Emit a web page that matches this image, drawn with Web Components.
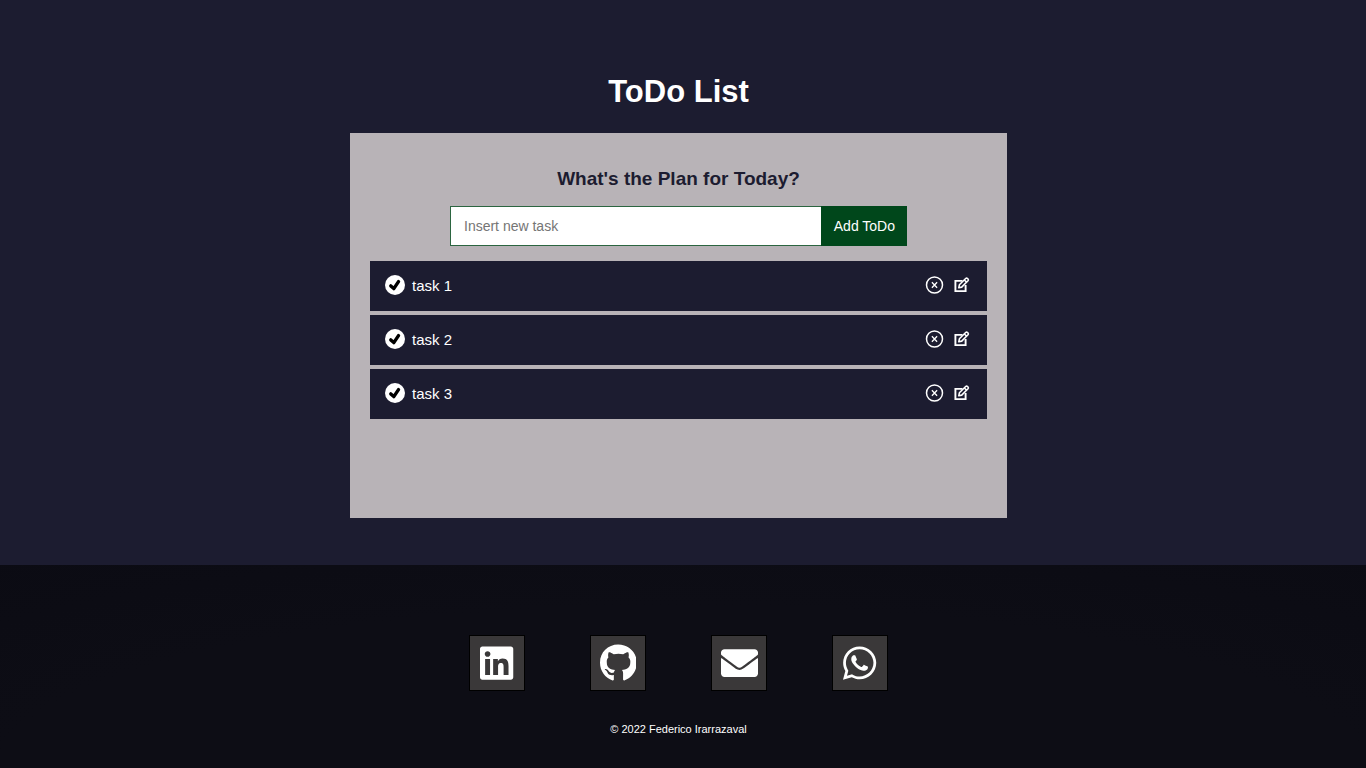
<!DOCTYPE html>
<html lang="en">
<head>
<meta charset="utf-8">
<title>ToDo List</title>
<style>
  body { margin: 0; background: #1c1c30; font-family: "Liberation Sans", Arial, sans-serif; color: #fff; }
</style>
</head>
<body>
<todo-app>
  <todo-panel>
    <todo-item>task 1</todo-item>
    <todo-item>task 2</todo-item>
    <todo-item>task 3</todo-item>
  </todo-panel>
  <site-footer slot="footer">
    <social-link name="linkedin" label="LinkedIn" href="#linkedin"></social-link>
    <social-link name="github" label="GitHub" href="#github"></social-link>
    <social-link name="envelope" label="Email" href="#email"></social-link>
    <social-link name="whatsapp" label="WhatsApp" href="#whatsapp"></social-link>
    <span slot="copyright">© 2022 Federico Irarrazaval</span>
  </site-footer>
</todo-app>

<template id="todo-app">
  <style>
    :host { display: flex; flex-direction: column; min-height: 100vh; }
    main { display: flex; flex-direction: column; align-items: center; padding: 73px 9px 47px 0; }
    h1 { margin: 0 0 22px; font-size: 31px; line-height: 38px; }
    ::slotted(site-footer) { flex: 1; }
  </style>
  <main>
    <h1>ToDo List</h1>
    <slot></slot>
  </main>
  <slot name="footer"></slot>
</template>

<template id="todo-panel">
  <style>
    :host { display: block; box-sizing: border-box; width: 48.4%; min-width: 520px; min-height: 385px;
      padding: 33px 20px; background: #b8b3b7; }
    h2 { margin: 0 0 14px; text-align: center; font-size: 19px; line-height: 26px; color: #1c1c30; }
    form { display: flex; width: 457px; max-width: 100%; margin: 0 auto 15px; }
    input { flex: 1; min-width: 0; box-sizing: border-box; height: 40px; padding: 0 13px; margin: 0;
      border: 1px solid #2b6540; border-right: 0; border-radius: 0; background: #fff; color: #1c1c30; font: inherit; font-size: 14px; outline: none; }
    input::placeholder { color: #757575; opacity: 1; }
    button { height: 40px; margin: 0; padding: 0 12px; border: 1px solid #00471b; border-right: 0;
      background: #00471b; color: #fff; font: inherit; font-size: 14px; cursor: pointer; }
    .list { display: flex; flex-direction: column; gap: 4px; }
  </style>
  <h2>What's the Plan for Today?</h2>
  <form>
    <input type="text" placeholder="Insert new task" aria-label="New task">
    <button type="submit">Add ToDo</button>
  </form>
  <div class="list" role="list"><slot></slot></div>
</template>

<template id="todo-item">
  <style>
    :host { display: flex; align-items: center; box-sizing: border-box; height: 50px; padding: 0 15px 2px; background: #1c1c30; font-size: 15px; }
    button { display: block; padding: 0; border: 0; background: none; color: #fff; cursor: pointer; }
    svg { display: block; }
    .text { flex: 1; margin-left: 7px; line-height: 24px; padding-top: 2px; }
    .actions { display: flex; gap: 7px; }
  </style>
  <button aria-label="Complete task">
    <svg width="20" height="20" viewBox="0 0 20 20"><circle cx="10" cy="10" r="10" fill="#fff"/><path d="M5.8 10.9l3 2.7 4.7-7" fill="none" stroke="#000" stroke-width="3.4" stroke-linecap="round" stroke-linejoin="round"/></svg>
  </button>
  <span class="text"><slot></slot></span>
  <div class="actions">
    <button aria-label="Delete task">
      <svg width="20" height="20" viewBox="0 0 20 20" fill="none" stroke="currentColor"><circle cx="9.5" cy="10" r="8" stroke-width="1.5"/><path d="M6.9 7.2l5.2 5.6M12.1 7.2l-5.2 5.6" stroke-width="1.3"/></svg>
    </button>
    <button aria-label="Edit task">
      <svg width="20" height="20" viewBox="0 0 20 20" fill="none" stroke="currentColor" stroke-width="1.9"><path d="M10.5 5.9H3.4v10.2h10.2V10"/><path d="M6.8 12.8l.6-3 6.3-6.3q.9-.8 1.8 0l.5.5q.8.9 0 1.8l-6.3 6.3zM12.4 5l2.2 2.2" stroke-width="1.6" stroke-linejoin="round"/></svg>
    </button>
  </div>
</template>

<template id="site-footer">
  <style>
    :host { display: flex; flex-direction: column; align-items: center; box-sizing: border-box; padding: 70px 9px 24px 0;
      background: radial-gradient(ellipse 100% 160% at 50% 100%, #0d0d15 0 50%, #0a0a12 100%); }
    nav { display: flex; gap: 65px; }
    small { margin-top: 30px; font-size: 11px; line-height: 16px; }
  </style>
  <nav aria-label="Contact"><slot></slot></nav>
  <small><slot name="copyright"></slot></small>
</template>

<template id="social-link">
  <style>
    :host { display: block; }
    a { display: flex; align-items: center; justify-content: center; box-sizing: border-box; width: 56px; height: 56px;
      border: 1px solid #000; background: #3a3839; color: #fff; }
    svg { display: block; height: 38px; width: auto; max-width: 37px; fill: currentColor; }
  </style>
  <a></a>
</template>

<script>
  const icons = {
    linkedin: [448, 'M416 32H31.9C14.3 32 0 46.5 0 64.3v383.4C0 465.5 14.3 480 31.9 480H416c17.6 0 32-14.5 32-32.3V64.3c0-17.8-14.4-32.3-32-32.3zM135.4 416H69V202.2h66.5V416zm-33.2-243c-21.3 0-38.5-17.3-38.5-38.5S80.9 96 102.2 96c21.2 0 38.5 17.3 38.5 38.5 0 21.3-17.2 38.5-38.5 38.5zm282.1 243h-66.4V312c0-24.8-.5-56.7-34.5-56.7-34.6 0-39.9 27-39.9 54.9V416h-66.4V202.2h63.7v29.2h.9c8.9-16.8 30.6-34.5 62.9-34.5 67.2 0 79.7 44.3 79.7 101.9V416z'],
    github: [496, 'M244.8 8C106.1 8 0 113.3 0 252c0 110.9 69.8 205.8 169.5 239.2 12.8 2.3 17.3-5.6 17.3-12.1 0-6.2-.3-40.4-.3-61.4 0 0-70 15-84.7-29.8 0 0-11.4-29.1-27.8-36.6 0 0-22.9-15.7 1.6-15.4 0 0 24.9 2 38.6 25.8 21.9 38.6 58.6 27.5 72.9 20.9 2.3-16 8.8-27.1 16-33.7-55.9-6.2-112.3-14.3-112.3-110.5 0-27.5 7.6-41.3 23.6-58.9-2.6-6.5-11.1-33.3 2.6-67.9 20.9-6.5 69 27 69 27 20-5.6 41.5-8.5 62.8-8.5s42.8 2.9 62.8 8.5c0 0 48.1-33.6 69-27 13.7 34.7 5.2 61.4 2.6 67.9 16 17.7 25.8 31.5 25.8 58.9 0 96.5-58.9 104.2-114.8 110.5 9.2 7.9 17 22.9 17 46.4 0 33.7-.3 75.4-.3 83.6 0 6.5 4.6 14.4 17.3 12.1C428.2 457.8 496 362.9 496 252 496 113.3 383.5 8 244.8 8z'],
    envelope: [512, 'M502.3 190.8c3.9-3.1 9.7-.2 9.7 4.7V400c0 26.5-21.5 48-48 48H48c-26.5 0-48-21.5-48-48V195.6c0-5 5.7-7.8 9.7-4.7 22.4 17.4 52.1 39.5 154.1 113.6 21.1 15.4 56.7 47.8 92.2 47.6 35.7.3 72-32.8 92.3-47.6 102-74.1 131.6-96.3 154-113.7zM256 320c23.2.4 56.6-29.2 73.4-41.4 132.7-96.3 142.8-104.7 173.4-128.7 5.8-4.5 9.2-11.5 9.2-18.9v-19c0-26.5-21.5-48-48-48H48c-26.5 0-48 21.5-48 48v19c0 7.4 3.4 14.3 9.2 18.9 30.6 23.9 40.7 32.4 173.4 128.7 16.8 12.2 50.2 41.8 73.4 41.4z'],
    whatsapp: [448, 'M380.9 97.1C339 55.1 283.2 32 223.9 32c-122.4 0-222 99.6-222 222 0 39.1 10.2 77.3 29.6 111L0 480l117.7-30.9c32.4 17.7 68.9 27 106.1 27h.1c122.3 0 224.1-99.6 224.1-222 0-59.3-25.2-115-67.1-157zm-157 341.6c-33.2 0-65.7-8.9-94-25.7l-6.7-4-69.8 18.3L72 359.2l-4.4-7c-18.5-29.4-28.2-63.3-28.2-98.2 0-101.7 82.8-184.5 184.6-184.5 49.3 0 95.6 19.2 130.4 54.1 34.8 34.9 56.2 81.2 56.1 130.5 0 101.8-84.9 184.6-186.6 184.6zm101.2-138.2c-5.5-2.8-32.8-16.2-37.9-18-5.1-1.9-8.8-2.8-12.5 2.8-3.7 5.6-14.3 18-17.6 21.8-3.2 3.7-6.5 4.2-12 1.4-32.6-16.3-54-29.1-75.5-66-5.7-9.8 5.7-9.1 16.3-30.3 1.8-3.7.9-6.9-.5-9.7-1.4-2.8-12.5-30.1-17.1-41.2-4.5-10.8-9.1-9.3-12.5-9.5-3.2-.2-6.9-.2-10.6-.2-3.7 0-9.7 1.4-14.8 6.9-5.1 5.6-19.4 19-19.4 46.3 0 27.3 19.9 53.7 22.6 57.4 2.8 3.7 39.1 59.7 94.8 83.8 35.2 15.2 49 16.5 66.6 13.9 10.7-1.6 32.8-13.4 37.4-26.4 4.6-13 4.6-24.1 3.2-26.4-1.3-2.5-5-3.9-10.5-6.6z']
  };

  class TemplateElement extends HTMLElement {
    constructor() {
      super();
      this.attachShadow({ mode: 'open' });
      this.shadowRoot.append(document.getElementById(this.localName).content.cloneNode(true));
    }
  }

  class TodoApp extends TemplateElement {}

  class TodoPanel extends TemplateElement {
    connectedCallback() {
      const form = this.shadowRoot.querySelector('form');
      const input = form.querySelector('input');
      form.onsubmit = (event) => {
        event.preventDefault();
        const text = input.value.trim();
        if (!text) return;
        const item = document.createElement('todo-item');
        item.textContent = text;
        this.prepend(item);
        input.value = '';
      };
    }
  }

  class TodoItem extends TemplateElement {
    connectedCallback() {
      this.setAttribute('role', 'listitem');
      this.shadowRoot.querySelector('[aria-label="Delete task"]').onclick = () => this.remove();
    }
  }

  class SiteFooter extends TemplateElement {}

  class SocialLink extends TemplateElement {
    connectedCallback() {
      const [width, path] = icons[this.getAttribute('name')];
      const link = this.shadowRoot.querySelector('a');
      link.href = this.getAttribute('href');
      link.setAttribute('aria-label', this.getAttribute('label'));
      link.innerHTML = `<svg viewBox="0 0 ${width} 512" aria-hidden="true"><path d="${path}"/></svg>`;
    }
  }

  customElements.define('todo-app', TodoApp);
  customElements.define('todo-panel', TodoPanel);
  customElements.define('todo-item', TodoItem);
  customElements.define('site-footer', SiteFooter);
  customElements.define('social-link', SocialLink);
</script>
</body>
</html>
